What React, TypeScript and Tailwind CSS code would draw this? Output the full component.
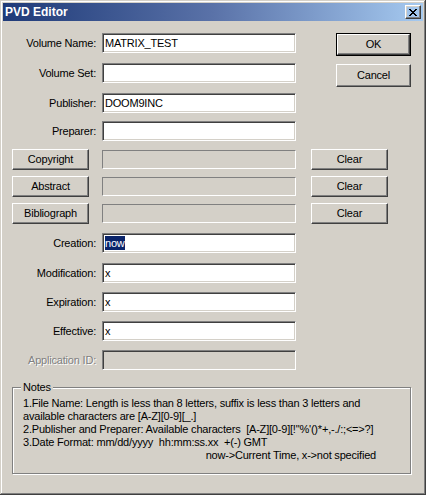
import React from 'react';

// Win2k-style 3D edges
const raised =
  'border border-t-white border-l-white border-b-[#404040] border-r-[#404040] shadow-[inset_-1px_-1px_0_#808080,inset_1px_1px_0_#d4d0c8]';
const sunken =
  'border border-t-[#808080] border-l-[#808080] border-b-white border-r-white shadow-[inset_1px_1px_0_#404040,inset_-1px_-1px_0_#d4d0c8]';
const staticEdge = 'border border-t-[#808080] border-l-[#808080] border-b-white border-r-white';

interface FieldRow {
  label: string;
  value: string;
  mt: string;
  selected?: boolean;
}

const topRows: FieldRow[] = [
  { label: 'Volume Name:', value: 'MATRIX_TEST', mt: 'mt-0' },
  { label: 'Volume Set:', value: '', mt: 'mt-[10px]' },
  { label: 'Publisher:', value: 'DOOM9INC', mt: 'mt-[10px]' },
  { label: 'Preparer:', value: '', mt: 'mt-[8px]' },
];

const dateRows: FieldRow[] = [
  { label: 'Creation:', value: 'now', mt: 'mt-[9px]', selected: true },
  { label: 'Modification:', value: 'x', mt: 'mt-[10px]' },
  { label: 'Expiration:', value: 'x', mt: 'mt-[9px]' },
  { label: 'Effective:', value: 'x', mt: 'mt-[9px]' },
];

const textRows = [
  { name: 'Copyright', mt: 'mt-[8px]' },
  { name: 'Abstract', mt: 'mt-[6px]' },
  { name: 'Bibliograph', mt: 'mt-[6px]' },
];

const Field = ({ row }: { row: FieldRow }) => (
  <div className={`flex items-center h-[20px] ${row.mt}`}>
    <div className="w-[84px] text-right">{row.label}</div>
    <div className={`ml-[6px] w-[194px] h-[20px] bg-white flex items-center pl-[2px] ${sunken}`}>
      {row.selected ? (
        <span className="bg-[#0a246a] text-white leading-[14px]">{row.value}</span>
      ) : (
        <span className="leading-[14px]">{row.value}</span>
      )}
    </div>
  </div>
);

const Button = ({ text, className = '' }: { text: string; className?: string }) => (
  <div className={`flex items-center justify-center bg-[#d4d0c8] ${raised} ${className}`}>{text}</div>
);

const App = () => {
  return (
    <div className="w-[426px] h-[495px] bg-[#d4d0c8] p-[3px] font-['Liberation_Sans',Arial,sans-serif] text-[11px] tracking-[-0.2px] text-black shadow-[inset_-1px_-1px_0_#404040,inset_1px_1px_0_#d4d0c8,inset_-2px_-2px_0_#808080,inset_2px_2px_0_#ffffff] overflow-hidden">
      {/* title bar */}
      <div className="h-[18px] flex items-center justify-between pl-[2px] pr-[2px] bg-gradient-to-r from-[#1f3a78] via-[#5a72a8] to-[#a6caf0]">
        <span className="text-white font-bold text-[12px] tracking-normal">PVD Editor</span>
        <div className={`w-[16px] h-[14px] flex items-center justify-center ${raised}`}>
          <svg width="8" height="7" viewBox="0 0 8 7" shapeRendering="crispEdges">
            <path d="M0 0h2v1h-2zM6 0h2v1h-2zM1 1h2v1h-2zM5 1h2v1h-2zM2 2h4v1h-4zM3 3h2v1h-2zM2 4h4v1h-4zM1 5h2v1h-2zM5 5h2v1h-2zM0 6h2v1h-2zM6 6h2v1h-2z" fill="#000" />
          </svg>
        </div>
      </div>

      <div className="pl-[9px] pt-[12px]">
        <div className="flex">
          <div className="flex flex-col">
            {topRows.map(r => (
              <Field key={r.label} row={r} />
            ))}
          </div>
          <div className="ml-[40px] flex flex-col">
            <div className="border border-black">
              <Button text="OK" className="w-[73px] h-[21px]" />
            </div>
            <Button text="Cancel" className="mt-[8px] w-[75px] h-[23px]" />
          </div>
        </div>

        {textRows.map(t => (
          <div key={t.name} className={`flex items-center h-[21px] ${t.mt}`}>
            <Button text={t.name} className="w-[77px] h-[21px]" />
            <div className={`ml-[13px] w-[194px] h-[19px] ${staticEdge}`} />
            <Button text="Clear" className="ml-[15px] w-[77px] h-[21px]" />
          </div>
        ))}

        {dateRows.map(r => (
          <Field key={r.label} row={r} />
        ))}

        <div className="flex items-center h-[20px] mt-[9px]">
          <div className="w-[84px] text-right text-[#808080] [text-shadow:1px_1px_0_#fff]">Application ID:</div>
          <div className={`ml-[6px] w-[194px] h-[20px] ${sunken}`} />
        </div>

        <div className="relative mt-[17px] w-[399px] h-[87px] border border-[#808080] shadow-[inset_1px_1px_0_#fff,1px_1px_0_#fff] pl-[10px] pt-[9px] leading-[13px]">
          <span className="absolute -top-[7px] left-[8px] px-[2px] bg-[#d4d0c8]">Notes</span>
          <div>1.File Name: Length is less than 8 letters, suffix is less than 3 letters and</div>
          <div>available characters are [A-Z][0-9][_.]</div>
          <div className="whitespace-pre">2.Publisher and Preparer: Available characters  [A-Z][0-9][!"%'()*+,-./:;&lt;=&gt;?]</div>
          <div className="whitespace-pre">3.Date Format: mm/dd/yyyy  hh:mm:ss.xx  +(-) GMT</div>
          <div className="text-right pr-[34px]">now-&gt;Current Time, x-&gt;not specified</div>
        </div>
      </div>
    </div>
  );
};

export default App;
